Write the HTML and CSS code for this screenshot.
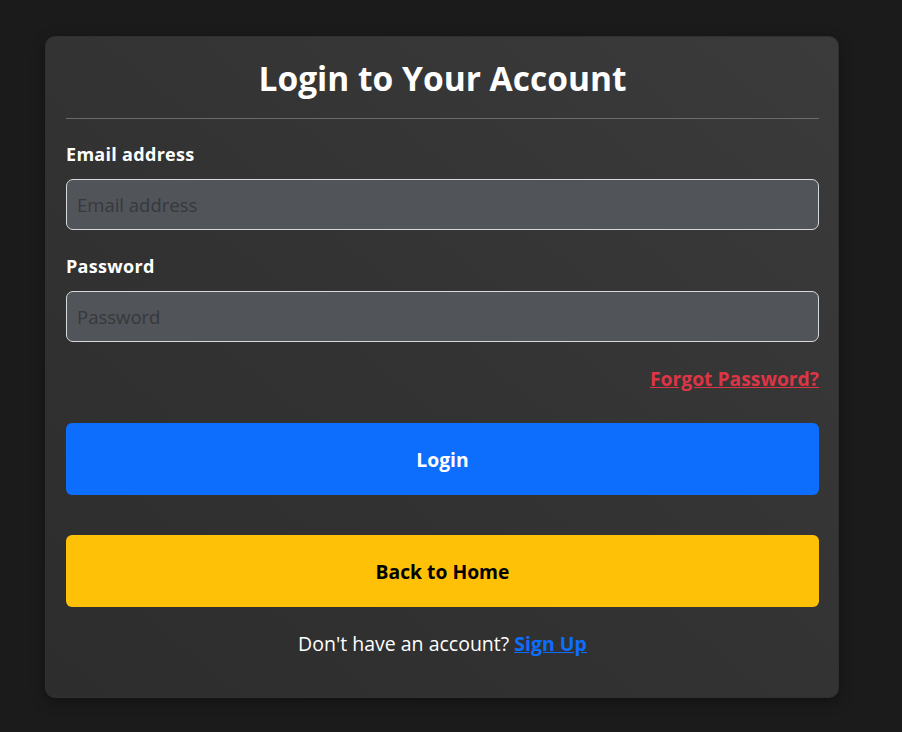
FILE: index.html
```html
<!DOCTYPE html>
<html lang="en">
<head>
<meta charset="utf-8">
<title>Login</title>
<link rel="stylesheet" href="styles.css">
</head>
<body>
<div class="card">
  <h2 class="title">Login to Your Account</h2>
  <hr class="divider">
  <form class="form">
    <div class="group">
      <label class="label" for="email">Email address</label>
      <input class="input" id="email" type="email" placeholder="Email address">
    </div>
    <div class="group group-second">
      <label class="label" for="password">Password</label>
      <input class="input" id="password" type="password" placeholder="Password">
    </div>
    <div class="forgot-row">
      <a class="forgot" href="#">Forgot Password?</a>
    </div>
    <button class="btn btn-login" type="button">Login</button>
    <button class="btn btn-home" type="button">Back to Home</button>
    <p class="signup">Don't have an account? <a class="signup-link" href="#">Sign Up</a></p>
  </form>
</div>
</body>
</html>
```
FILE: styles.css
```css
* { box-sizing: border-box; }
html, body {
  margin: 0;
  padding: 0;
  background: #1b1b1b;
  font-family: "Open Sans", "Noto Sans", sans-serif;
  color: #fff;
}
body { padding: 36px 0 0 45px; height: 732px; overflow: hidden; }
.card {
  width: 794px;
  padding: 20px 19px 40px 20px;
  border: 1px solid #303030;
  border-radius: 10px;
  background: linear-gradient(to top right, #2d2d2d 0%, #333 50%, #3b3b3b 100%);
  box-shadow: 0 4px 14px rgba(0,0,0,0.35);
}
.title {
  margin: 0;
  height: 43px;
  line-height: 43px;
  font-size: 33.5px;
  font-weight: 700;
  text-align: center;
}
.divider {
  margin: 18px 0 0;
  border: 0;
  height: 1px;
  background: #6a6a6a;
}
.form { margin: 0; }
.group { margin-top: 22px; display: flex; flex-direction: column; }
.group-second { margin-top: 23px; }
.label {
  font-size: 18px;
  font-weight: 700;
  line-height: 27px;
  margin-bottom: 11px;
  letter-spacing: 0.3px;
}
.input {
  height: 51px;
  width: 100%;
  padding: 0 10px;
  font-family: inherit;
  font-size: 18.5px;
  color: #fff;
  background: #515459;
  border: 1px solid #d6d9dc;
  border-radius: 7px;
  outline: none;
}
.input::placeholder { color: #36393d; opacity: 1; }
.forgot-row { margin-top: 23px; display: flex; justify-content: flex-end; line-height: 27px; }
.forgot {
  color: #dc3545;
  font-size: 19.3px;
  font-weight: 700;
  text-decoration: underline;
}
.btn {
  display: flex;
  align-items: center;
  justify-content: center;
  width: 100%;
  height: 72px;
  border: 0;
  border-radius: 6px;
  font-family: inherit;
  font-size: 19.3px;
  font-weight: 700;
  cursor: pointer;
}
.btn-login { margin-top: 31px; background: #0d6efd; color: #fff; }
.btn-home { margin-top: 40px; background: #ffc107; color: #000; }
.signup {
  margin: 23px 0 0;
  line-height: 27px;
  font-size: 19.5px;
  text-align: center;
}
.signup-link { color: #0d6efd; font-weight: 700; text-decoration: underline; }
```
